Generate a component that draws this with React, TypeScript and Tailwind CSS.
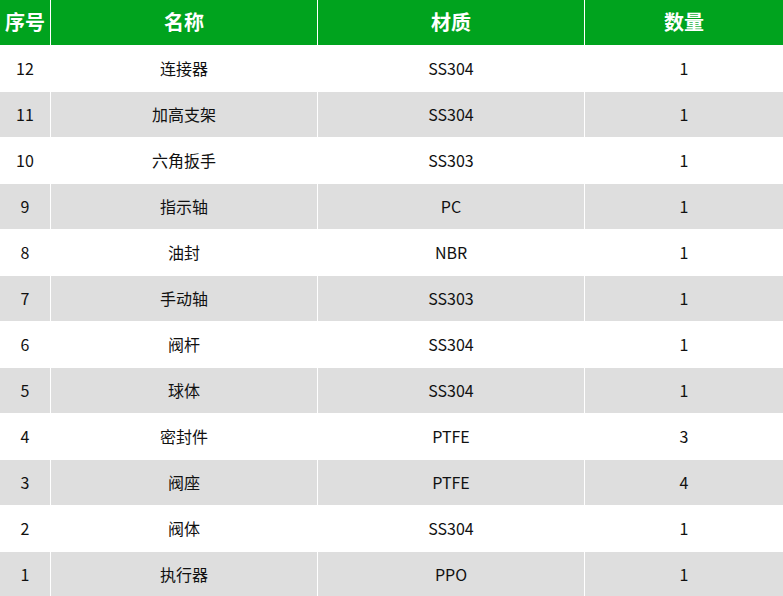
import React from 'react';

interface Part {
  no: number;
  name: string;
  material: string;
  qty: number;
}

const parts: Part[] = [
  { no: 12, name: '连接器', material: 'SS304', qty: 1 },
  { no: 11, name: '加高支架', material: 'SS304', qty: 1 },
  { no: 10, name: '六角扳手', material: 'SS303', qty: 1 },
  { no: 9, name: '指示轴', material: 'PC', qty: 1 },
  { no: 8, name: '油封', material: 'NBR', qty: 1 },
  { no: 7, name: '手动轴', material: 'SS303', qty: 1 },
  { no: 6, name: '阀杆', material: 'SS304', qty: 1 },
  { no: 5, name: '球体', material: 'SS304', qty: 1 },
  { no: 4, name: '密封件', material: 'PTFE', qty: 3 },
  { no: 3, name: '阀座', material: 'PTFE', qty: 4 },
  { no: 2, name: '阀体', material: 'SS304', qty: 1 },
  { no: 1, name: '执行器', material: 'PPO', qty: 1 },
];

const headers = ['序号', '名称', '材质', '数量'];

const App: React.FC = () => {
  return (
    <div
      className="w-[783px] h-[596px] overflow-hidden bg-white"
      style={{ fontFamily: '"Noto Sans CJK SC", "Noto Sans", sans-serif' }}
    >
      <div className="grid grid-cols-[51px_267px_267px_1fr]">
        {headers.map((h, i) => (
          <div
            key={h}
            className={`h-[46px] pb-px flex items-center justify-center bg-[#00a31e] text-white text-[20px] font-bold border-b border-white ${
              i < 3 ? 'border-r' : ''
            }`}
          >
            {h}
          </div>
        ))}
        {parts.map((p, idx) => {
          const bg = idx % 2 === 1 ? 'bg-[#dedede]' : 'bg-white';
          const cells = [p.no, p.name, p.material, p.qty];
          return cells.map((c, i) => (
            <div
              key={`${p.no}-${i}`}
              className={`h-[46px] pb-[2px] flex items-center justify-center ${bg} text-[#111] text-[16px] border-b border-white ${
                i < 3 ? 'border-r' : ''
              }`}
            >
              {c}
            </div>
          ));
        })}
      </div>
    </div>
  );
};

export default App;
